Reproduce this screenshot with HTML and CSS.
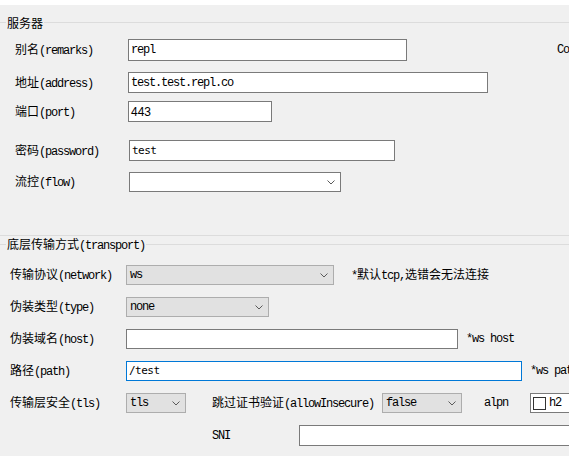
FILE: index.html
```html
<!DOCTYPE html>
<html lang="zh-CN">
<head>
  <meta charset="UTF-8">
  <title>编辑服务器</title>
  <link rel="stylesheet" href="styles.css">
</head>
<body>
  <div class="strip"></div>

  <!-- server -->
  <section class="group server">
    <div class="legend"><span>服务器</span></div>

    <div class="row r1">
      <label class="lbl">别名<span class="en">(remarks)</span></label>
      <div class="box w-remarks"><span class="en">repl</span></div>
      <span class="en core">Core类型</span>
    </div>
    <div class="row r2">
      <label class="lbl">地址<span class="en">(address)</span></label>
      <div class="box w-address"><span class="en">test.test.repl.co</span></div>
    </div>
    <div class="row r3">
      <label class="lbl">端口<span class="en">(port)</span></label>
      <div class="box w-port"><span class="num">443</span></div>
    </div>
    <div class="row r4">
      <label class="lbl">密码<span class="en">(password)</span></label>
      <div class="box w-password shift"><span class="mono">test</span></div>
    </div>
    <div class="row r5">
      <label class="lbl">流控<span class="en">(flow)</span></label>
      <div class="combo white w-flow shift">
        <span></span>
        <svg class="chev" width="8" height="5" viewBox="0 0 8 5"><polyline points="0.5,0.5 4,4 7.5,0.5"/></svg>
      </div>
    </div>
  </section>

  <!-- transport -->
  <section class="group transport">
    <div class="legend"><span>底层传输方式<span class="en">(transport)</span></span></div>

    <div class="row first">
      <label class="lbl">传输协议<span class="en">(network)</span></label>
      <div class="combo w-network">
        <span class="en">ws</span>
        <svg class="chev" width="8" height="5" viewBox="0 0 8 5"><polyline points="0.5,0.5 4,4 7.5,0.5"/></svg>
      </div>
      <span class="hint net-hint"><span class="en">*</span>默认<span class="en">tcp,</span>选错会无法连接</span>
    </div>
    <div class="row">
      <label class="lbl">伪装类型<span class="en">(type)</span></label>
      <div class="combo w-type">
        <span class="en">none</span>
        <svg class="chev" width="8" height="5" viewBox="0 0 8 5"><polyline points="0.5,0.5 4,4 7.5,0.5"/></svg>
      </div>
    </div>
    <div class="row">
      <label class="lbl">伪装域名<span class="en">(host)</span></label>
      <div class="box w-host"></div>
      <span class="en hint">*ws host</span>
    </div>
    <div class="row">
      <label class="lbl">路径<span class="en">(path)</span></label>
      <div class="box focus w-path"><span class="mono">/test</span></div>
      <span class="en hint">*ws path</span>
    </div>
    <div class="row">
      <label class="lbl">传输层安全<span class="en">(tls)</span></label>
      <div class="combo w-tls">
        <span class="en">tls</span>
        <svg class="chev" width="8" height="5" viewBox="0 0 8 5"><polyline points="0.5,0.5 4,4 7.5,0.5"/></svg>
      </div>
      <label class="insecure">跳过证书验证<span class="en">(allowInsecure)</span></label>
      <div class="combo w-insecure">
        <span class="en">false</span>
        <svg class="chev" width="8" height="5" viewBox="0 0 8 5"><polyline points="0.5,0.5 4,4 7.5,0.5"/></svg>
      </div>
      <label class="en alpn">alpn</label>
      <div class="box list">
        <span class="check"></span><span class="en">h2</span>
      </div>
    </div>
    <div class="row sni">
      <label class="en sni-lbl">SNI</label>
      <div class="box w-sni"></div>
    </div>
  </section>
</body>
</html>
```

FILE: styles.css
```css
* {
  margin: 0;
  padding: 0;
  box-sizing: border-box;
}

body {
  width: 569px;
  height: 456px;
  overflow: hidden;
  background: #f0f0f0;
  color: #000;
  font-family: "Noto Sans CJK SC", sans-serif;
  font-size: 12px;
  line-height: 14px;
}

/* latin text in the dialog font is narrow and fixed width */
.en {
  font-family: "Liberation Mono", monospace;
  letter-spacing: -1.2px;
}

.num {
  font-family: "Liberation Sans", sans-serif;
  font-size: 12px;
}

.mono {
  font-family: "DejaVu Sans Mono", monospace;
  font-size: 11px;
  letter-spacing: -0.5px;
}

.strip {
  height: 5px;
  background: #fff;
}

/* group boxes */
.group {
  border-bottom: 1px solid #dcdcdc;
}

.server {
  padding-bottom: 43px;
}

.transport {
  border-bottom: none;
}

.legend {
  display: flex;
  align-items: center;
  height: 15px;
  white-space: nowrap;
}

.legend::before {
  content: "";
  width: 6px;
  border-top: 1px solid #dcdcdc;
}

.legend::after {
  content: "";
  flex: 1;
  border-top: 1px solid #dcdcdc;
}

.legend > span {
  padding: 0 1px;
}

.server .legend {
  margin-top: 10px;
}

.transport .legend {
  margin-top: 1px;
}

/* rows */
.row {
  display: flex;
  align-items: center;
  height: 20px;
  margin-top: 12px;
  white-space: nowrap;
}

.row > * {
  flex-shrink: 0;
}

.server .row {
  padding-left: 15px;
}

.server .lbl {
  width: 113px;
}

.transport .row {
  padding-left: 10px;
}

.transport .lbl {
  width: 116px;
}

.r1 { margin-top: 9px; height: 22px; }
.r2 { margin-top: 11px; height: 21px; }
.r3 { margin-top: 8px; height: 21px; }
.r4 { margin-top: 18px; height: 21px; }
.r5 { margin-top: 11px; height: 20px; }

.transport .first {
  margin-top: 13px;
}

.transport .sni {
  height: 21px;
}

/* controls */
.box {
  display: flex;
  align-items: center;
  height: 100%;
  padding-left: 2px;
  background: #fff;
  border: 1px solid #7a7a7a;
}

.box.focus {
  border-color: #0078d7;
}

.combo {
  display: flex;
  align-items: center;
  justify-content: space-between;
  height: 100%;
  padding: 0 5px 0 3px;
  background: #e1e1e1;
  border: 1px solid #adadad;
}

.combo.white {
  background: #fff;
  border-color: #7a7a7a;
}

.chev polyline {
  fill: none;
  stroke: #5a5a5a;
  stroke-width: 1;
}

.shift {
  margin-left: 1px;
}

.w-remarks { width: 279px; }
.w-address { width: 360px; }
.w-port { width: 144px; }
.w-password { width: 266px; }
.w-flow { width: 212px; }
.w-network { width: 208px; }
.w-type { width: 143px; }
.w-host { width: 332px; }
.w-path { width: 396px; }
.w-tls { width: 60px; }
.w-insecure { width: 80px; }
.w-sni { width: 300px; }

.core {
  margin-left: 150px;
}

.hint {
  margin-left: 8px;
}

.net-hint {
  margin-left: 17px;
}

.insecure {
  width: 170px;
  margin-left: 26px;
}

.alpn {
  width: 46px;
  margin-left: 22px;
}

.list {
  width: 80px;
  padding-left: 2px;
  gap: 3px;
}

.check {
  width: 13px;
  height: 13px;
  background: #fff;
  border: 1px solid #333;
}

.sni-lbl {
  width: 87px;
  margin-left: 202px;
}
```
